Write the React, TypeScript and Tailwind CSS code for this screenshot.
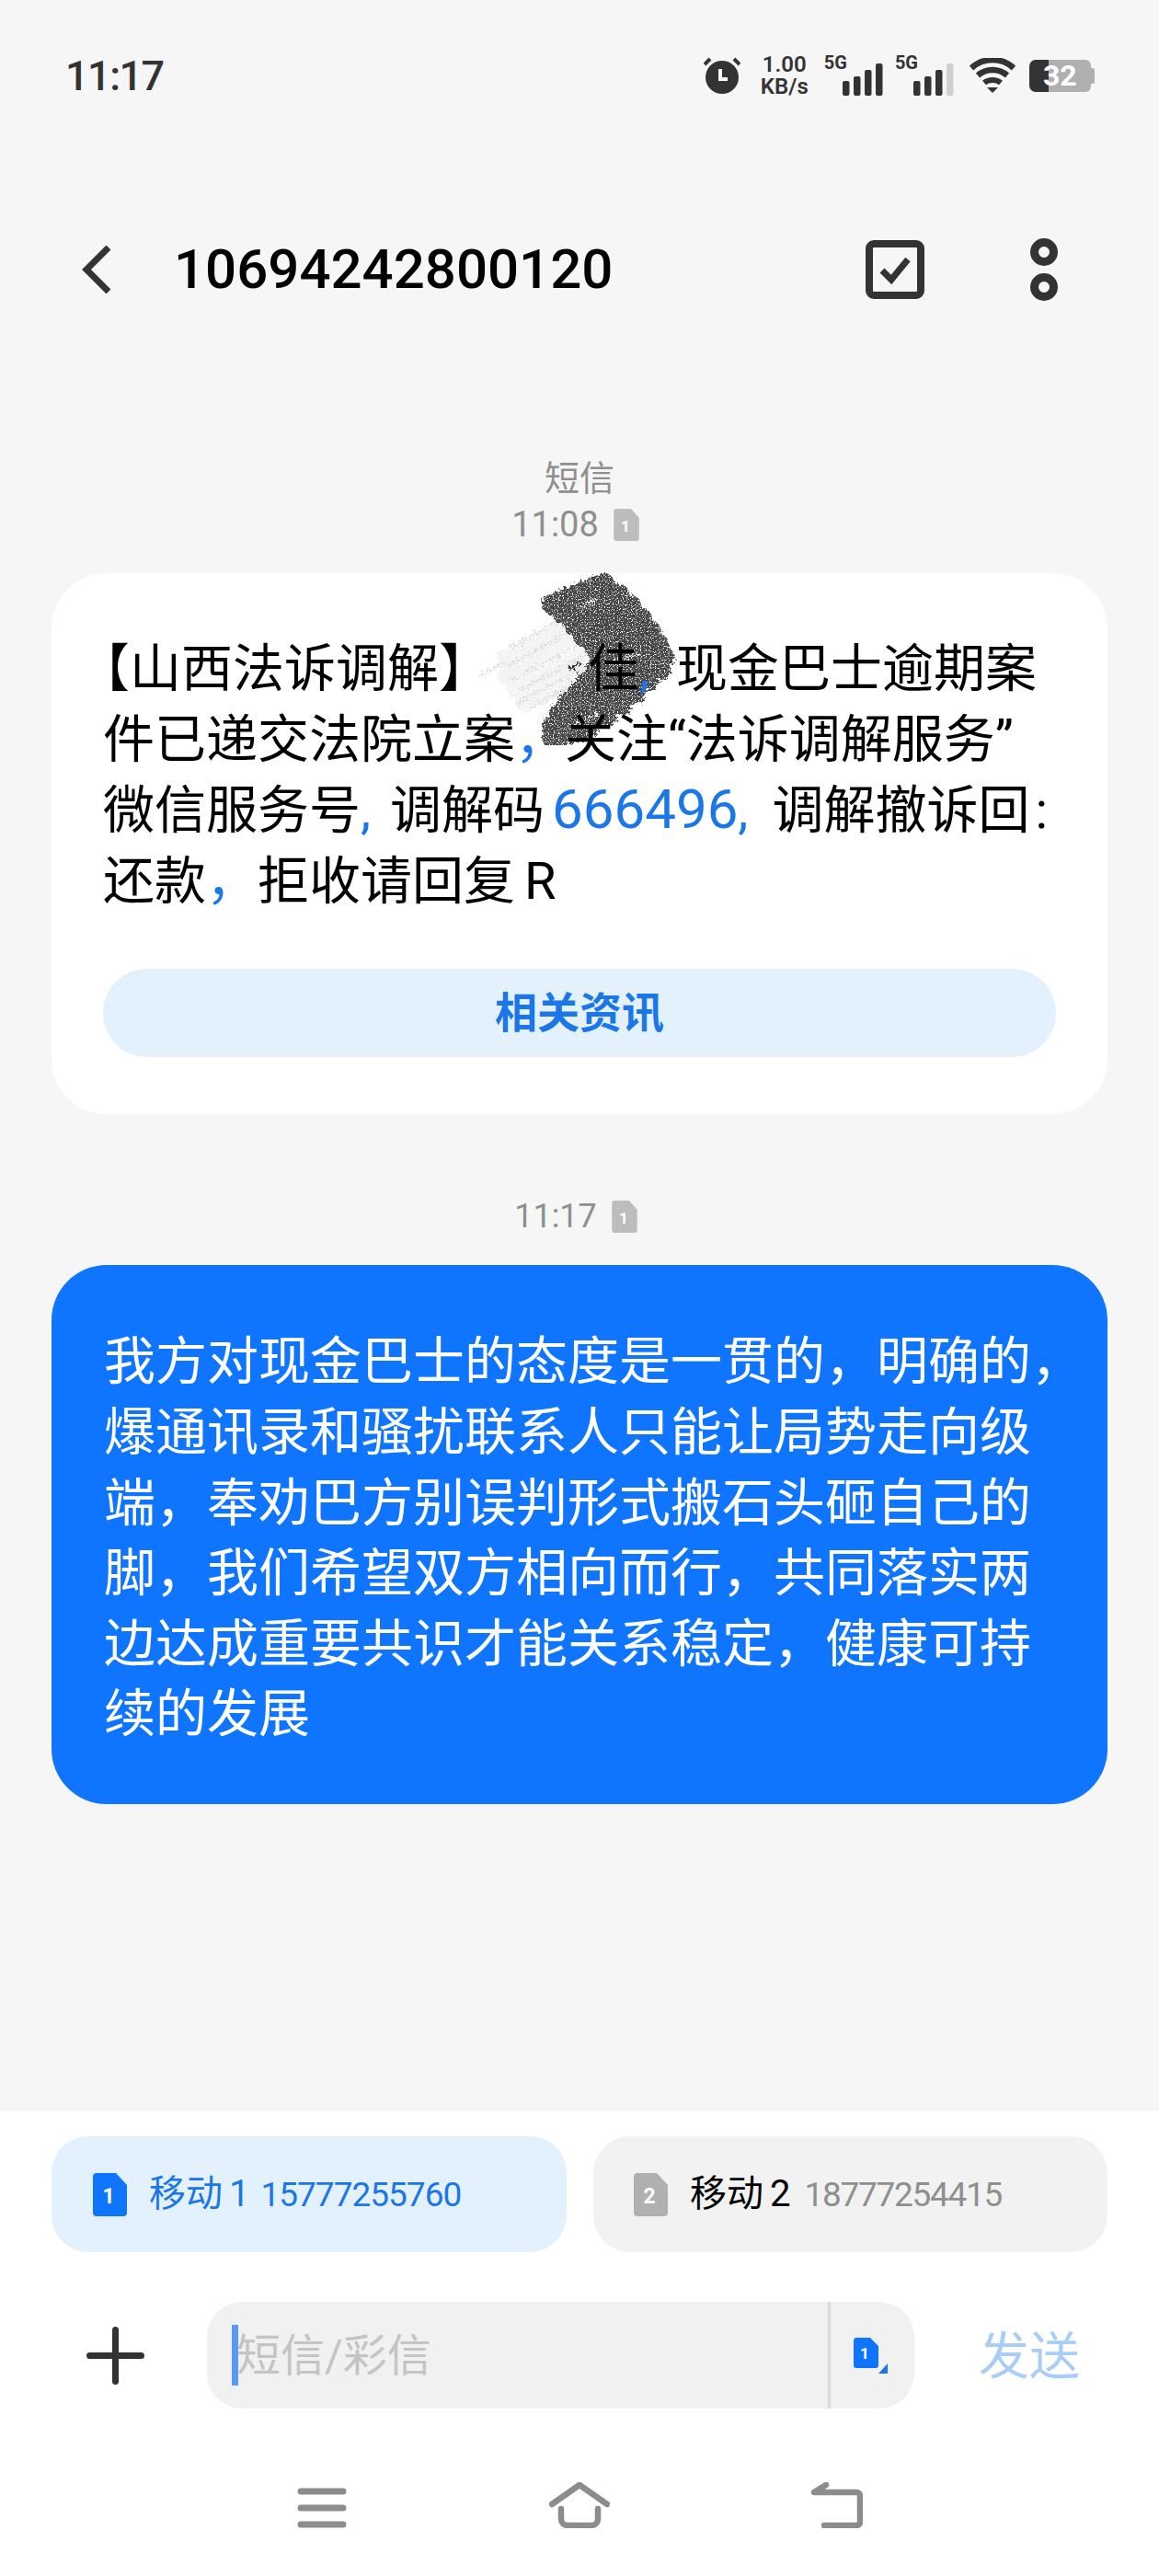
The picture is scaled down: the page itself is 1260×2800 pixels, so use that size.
const font = "font-['Roboto','Noto_Sans_CJK_SC',sans-serif]";

const darkStrokes = [
  [100, 47, 157, 24],
  [112, 58, 173, 36],
  [124, 70, 186, 48],
  [134, 82, 198, 62],
  [146, 94, 208, 76],
  [152, 106, 216, 90],
  [148, 118, 222, 104],
  [138, 130, 218, 118],
  [128, 142, 205, 130],
  [116, 154, 190, 144],
  [108, 166, 176, 156],
  [100, 180, 160, 168],
  [100, 192, 138, 182],
];

const faintFill = [
  [50, 105, 110, 70],
  [50, 125, 130, 82],
  [60, 140, 140, 100],
  [70, 155, 140, 120],
];

const faintStrokes = [
  [55, 95, 110, 62],
  [50, 115, 130, 70],
  [55, 130, 140, 85],
  [65, 140, 150, 95],
  [60, 155, 155, 105],
  [75, 160, 150, 120],
  [85, 170, 140, 135],
  [20, 125, 50, 110],
];

const Scribble = () => (
  <svg
    width="240"
    height="200"
    viewBox="0 0 240 200"
    className="absolute left-[444px] top-[-13px]"
  >
    <defs>
      <filter id="grain" x="-10%" y="-10%" width="120%" height="120%" colorInterpolationFilters="sRGB">
        <feTurbulence type="fractalNoise" baseFrequency="0.3" numOctaves="2" seed="4" result="lumps" />
        <feDisplacementMap in="SourceGraphic" in2="lumps" scale="10" result="shape" />
        <feTurbulence type="fractalNoise" baseFrequency="0.8" numOctaves="1" seed="9" result="speck" />
        <feColorMatrix
          in="speck"
          type="matrix"
          values="0 0 0 0 0  0 0 0 0 0  0 0 0 0 0  7 0 0 0 -2.2"
          result="mask"
        />
        <feComposite in="shape" in2="mask" operator="in" />
      </filter>
    </defs>
    <g filter="url(#grain)">
      {faintFill.map((s, i) => (
        <line key={i} x1={s[0]} y1={s[1]} x2={s[2]} y2={s[3]} stroke="#f2f2f2" strokeWidth="18" strokeLinecap="round" />
      ))}
      {faintStrokes.map((s, i) => (
        <line key={i} x1={s[0]} y1={s[1]} x2={s[2]} y2={s[3]} stroke="#dcdcdc" strokeWidth="2.5" />
      ))}
      {darkStrokes.map((s, i) => (
        <line
          key={i}
          x1={s[0]}
          y1={s[1]}
          x2={s[2]}
          y2={s[3]}
          stroke="#454545"
          strokeWidth="22"
          strokeLinecap="round"
        />
      ))}
      <line x1="170" y1="110" x2="195" y2="100" stroke="#ffffff" strokeWidth="2" />
      <line x1="125" y1="178" x2="150" y2="165" stroke="#ffffff" strokeWidth="2" />
      <line x1="130" y1="50" x2="150" y2="40" stroke="#ffffff" strokeWidth="1.5" />
      <line x1="118" y1="118" x2="132" y2="110" stroke="#333333" strokeWidth="3" />
    </g>
  </svg>
);

const Signal = ({ level }: { level: number }) => (
  <svg width="44" height="35" viewBox="0 0 44 35">
    {[
      [0, 19],
      [12, 14],
      [24, 7],
      [36, 0],
    ].map((b, i) => (
      <rect
        key={i}
        x={b[0]}
        y={b[1]}
        width="7.5"
        height={35 - b[1]}
        rx="2"
        fill={i < level ? "#333333" : "#d0d0d0"}
      />
    ))}
  </svg>
);

const SimIcon = ({ n, color, w = 37, h = 47 }: { n: string; color: string; w?: number; h?: number }) => (
  <svg width={w} height={h} viewBox="0 0 37 47">
    <path
      d="M4 0H25L37 13V43a4 4 0 0 1-4 4H4a4 4 0 0 1-4-4V4a4 4 0 0 1 4-4Z"
      fill={color}
    />
    <text
      x="17"
      y="33"
      textAnchor="middle"
      fontSize="23"
      fontWeight="700"
      fontFamily="Roboto"
      fill="#ffffff"
    >
      {n}
    </text>
  </svg>
);

const Comma = () => <span className="text-[#1b76e8]">,</span>;
const WideComma = () => <span className="text-[#1b76e8]">，</span>;

export default function App() {
  return (
    <div className={`flex h-[2800px] w-[1260px] flex-col bg-[#f6f6f6] ${font}`}>
      {/* status bar */}
      <div className="flex h-[164px] items-center justify-between pl-[71px] pr-[70px]">
        <span className="text-[45px] font-medium leading-none tracking-[-1.5px] text-[#333333]">11:17</span>
        <div className="flex items-center text-[#333333]">
          <svg width="40" height="40" viewBox="0 0 40 40">
            <circle cx="20" cy="22" r="18" fill="#333333" />
            <path d="M1 8 7 2M39 8 33 2" stroke="#333333" strokeWidth="4" />
            <path d="M18 13v11h8" stroke="#f6f6f6" strokeWidth="4" fill="none" />
          </svg>
          <div className="ml-[20px] flex w-[56px] flex-col items-center text-[24px] font-semibold leading-[24px]">
            <span>1.00</span>
            <span>KB/s</span>
          </div>
          <div className="ml-[15px] flex items-start">
            <span className="mt-[-2px] text-[20px] font-bold leading-[20px]">5G</span>
            <div className="ml-[-5px] mt-[9px]">
              <Signal level={4} />
            </div>
          </div>
          <div className="ml-[13px] flex items-start">
            <span className="mt-[-2px] text-[20px] font-bold leading-[20px]">5G</span>
            <div className="ml-[-5px] mt-[9px]">
              <Signal level={3} />
            </div>
          </div>
          <svg width="50" height="38" viewBox="0 0 50 38" className="ml-[17px]">
            <path d="M2 11C15-1 35-1 48 11" stroke="#333333" strokeWidth="6.5" fill="none" />
            <path d="M9 19C18 11 32 11 41 19" stroke="#333333" strokeWidth="6.5" fill="none" />
            <path d="M16 27C21 23 29 23 34 27" stroke="#333333" strokeWidth="6" fill="none" />
            <path d="M19 32h12l-6 6Z" fill="#333333" />
          </svg>
          <div className="relative ml-[15px] flex h-[35px] w-[71px] items-center">
            <div className="h-full w-[21px] rounded-l-[7px] bg-[#333333]" />
            <div className="h-full w-[46px] rounded-r-[6px] bg-[#b0b0b0]" />
            <div className="h-[17px] w-[4px] rounded-r-[2px] bg-[#b0b0b0]" />
            <span className="absolute left-[15px] top-0 text-[32px] font-bold leading-[35px] text-white">
              32
            </span>
          </div>
        </div>
      </div>

      {/* header */}
      <div className="mt-[64px] flex h-[130px] items-center pl-[88px] pr-[110px]">
        <svg width="34" height="52" viewBox="0 0 34 52">
          <path d="M30 2 6 26l24 24" stroke="#333333" strokeWidth="7" fill="none" />
        </svg>
        <span className="ml-[67px] flex-1 text-[60px] font-medium leading-none text-black">
          10694242800120
        </span>
        <svg width="64" height="64" viewBox="0 0 64 64">
          <rect x="4" y="4" width="56" height="56" rx="5" stroke="#333333" strokeWidth="8" fill="none" />
          <path d="M18 33l10 10 18-22" stroke="#333333" strokeWidth="7" fill="none" />
        </svg>
        <svg width="30" height="68" viewBox="0 0 30 68" className="ml-[115px]">
          <circle cx="15" cy="15" r="10.5" stroke="#333333" strokeWidth="9" fill="none" />
          <circle cx="15" cy="53" r="10.5" stroke="#333333" strokeWidth="9" fill="none" />
        </svg>
      </div>

      {/* messages */}
      <div className="mt-[137px] flex flex-1 flex-col px-[56px]">
        <div className="flex flex-col items-center text-[#8f8f8f]">
          <span className="text-[38px] leading-[50px]">短信</span>
          <div className="mt-[2px] flex h-[46px] items-center gap-[16px] pr-[9px]">
            <span className="text-[38px] leading-none">11:08</span>
            <SimIcon n="1" color="#bdbdbd" w={28} h={35} />
          </div>
        </div>

        <div className="relative mt-[30px] rounded-[60px] bg-white pb-[62px] pl-[56px] pr-[56px] pt-[66px]">
          <Scribble />
          <div className="relative whitespace-nowrap text-[56px] leading-[76.6px] text-black">
            <div>
              <span className="ml-[-27px]">【</span>山西法诉调解】
              <span className="inline-block w-[106px]" />佳
              <span className="mr-[29px] text-[#1b76e8]">,</span>现金巴士逾期案
            </div>
            <div>
              件已递交法院立案
              <WideComma />
              <span className="ml-[-2px]">关注“法诉调解服务”</span>
            </div>
            <div>
              微信服务号
              <Comma />
              <span className="ml-[21px]">调解码</span>
              <span className="ml-[8px] text-[60px] text-[#1b76e8]">666496</span>
              <Comma />
              <span className="ml-[26px]">调解撤诉回</span>
              <span className="ml-[6px]">:</span>
            </div>
            <div>
              还款
              <WideComma />
              拒收请回复<span className="ml-[10px]">R</span>
            </div>
          </div>
          <div className="relative mt-[57px] flex h-[96px] items-center justify-center rounded-full bg-[#e3f1fd] text-[46px] font-bold text-[#1b76e8]">
            相关资讯
          </div>
        </div>

        <div className="mt-[88px] flex h-[46px] items-center justify-center gap-[16px] pr-[8px] text-[#8f8f8f]">
          <span className="text-[36px] leading-none">11:17</span>
          <SimIcon n="1" color="#bdbdbd" w={28} h={35} />
        </div>

        <div className="mt-[30px] whitespace-nowrap rounded-[60px] bg-[#0f75ff] pb-[59px] pl-[57px] pr-[20px] pt-[67px] text-[56px] leading-[76.6px] text-white">
          <div>我方对现金巴士的态度是一贯的，明确的，</div>
          <div>爆通讯录和骚扰联系人只能让局势走向级</div>
          <div>端，奉劝巴方别误判形式搬石头砸自己的</div>
          <div>脚，我们希望双方相向而行，共同落实两</div>
          <div>边达成重要共识才能关系稳定，健康可持</div>
          <div>续的发展</div>
        </div>
      </div>

      {/* bottom panel */}
      <div className="h-[505px] bg-white pt-[27px]">
        <div className="flex gap-[29px] px-[56px]">
          <div className="flex h-[126px] flex-1 items-center rounded-[40px] bg-[#e3f1fd] pl-[45px]">
            <SimIcon n="1" color="#0f75ff" />
            <span className="ml-[24px] text-[40px] leading-none text-[#1b76e8]">移动</span>
            <span className="ml-[7px] text-[40px] leading-none text-[#1b76e8]">1</span>
            <span className="ml-[12px] text-[37px] leading-none tracking-[-1px] text-[#1b76e8]">
              15777255760
            </span>
          </div>
          <div className="flex h-[126px] flex-1 items-center rounded-[40px] bg-[#f2f2f2] pl-[44px]">
            <SimIcon n="2" color="#b0b0b0" />
            <span className="ml-[24px] text-[40px] leading-none text-black">移动</span>
            <span className="ml-[7px] text-[40px] leading-none text-black">2</span>
            <span className="ml-[15px] text-[37px] leading-none tracking-[-1.3px] text-[#8f8f8f]">
              18777254415
            </span>
          </div>
        </div>

        <div className="mt-[54px] flex h-[116px] items-center pl-[94px]">
          <svg width="63" height="63" viewBox="0 0 63 63">
            <path d="M3.5 31.5h56M31.5 3.5v56" stroke="#333333" strokeWidth="7" strokeLinecap="round" />
          </svg>
          <div className="ml-[68px] flex h-full w-[769px] items-center rounded-[38px] bg-[#f1f1f1]">
            <div className="flex w-[675px] items-center pl-[27px]">
              <div className="h-[66px] w-[7px] shrink-0 bg-[#5a9af5]" />
              <span className="ml-[-2px] mt-[2px] text-[48px] leading-none text-[#c4c4c4]">短信/彩信</span>
            </div>
            <div className="h-full w-[3px] bg-[#d9d9d9]" />
            <svg width="37" height="39" viewBox="0 0 37 39" className="ml-[25px]">
              <path
                d="M3 0H18L27 9V30a3 3 0 0 1-3 3H3a3 3 0 0 1-3-3V3a3 3 0 0 1 3-3Z"
                fill="#0f75ff"
              />
              <text x="12" y="23" textAnchor="middle" fontSize="17" fontWeight="700" fontFamily="Roboto" fill="#ffffff">
                1
              </text>
              <path d="M37 28v11H27Z" fill="#1b76e8" />
            </svg>
          </div>
          <span className="ml-[70px] mt-[3px] text-[55px] leading-none text-[#a9cdf6]">发送</span>
        </div>

        <div className="mt-[80px] flex items-start pl-[323px]">
          <svg width="54" height="44" viewBox="0 0 54 44" className="mt-[6px]">
            <path d="M4 4h46M4 22h46M4 40h46" stroke="#8c8c8c" strokeWidth="7" strokeLinecap="round" />
          </svg>
          <svg width="66" height="50" viewBox="0 0 66 50" className="ml-[220px]">
            <path d="M3 24 33 3l30 21" stroke="#8c8c8c" strokeWidth="6.5" strokeLinecap="round" strokeLinejoin="round" fill="none" />
            <path d="M13 29v11a7 7 0 0 0 7 7h26a7 7 0 0 0 7-7V29" stroke="#8c8c8c" strokeWidth="6.5" strokeLinecap="round" fill="none" />
          </svg>
          <svg width="56" height="50" viewBox="0 0 56 50" className="ml-[219px]">
            <path d="M16 3 3 11h46a4 4 0 0 1 4 4v28a4 4 0 0 1-4 4H14" stroke="#8c8c8c" strokeWidth="6.5" strokeLinecap="round" strokeLinejoin="round" fill="none" />
          </svg>
        </div>
      </div>
    </div>
  );
}
